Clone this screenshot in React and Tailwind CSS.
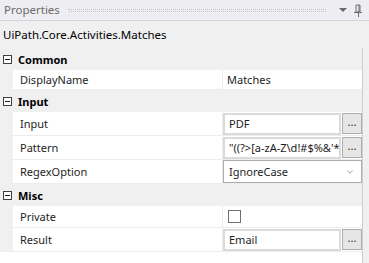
import { ChevronDown } from "lucide-react";

const font = { fontFamily: '"Noto Sans", "Open Sans", sans-serif' };

function Category({ label }) {
  return (
    <div className="flex h-[22px] items-center bg-[#f0f0f0]">
      <span className="ml-[3px] mt-[1px] flex h-[9px] w-[9px] items-center justify-center border border-[#404040] bg-white">
        <span className="h-px w-[5px] bg-[#202020]" />
      </span>
      <span className="ml-[6px] pt-[2px] text-[11px] font-bold text-black">{label}</span>
    </div>
  );
}

function Row({ name, h = "h-[24px]", children }) {
  return (
    <div className={`flex ${h}`}>
      <div className="w-[13px] shrink-0 bg-[#f0f0f0]" />
      <div className="flex w-[210px] shrink-0 items-center border-b border-r border-[#ececec] bg-white pl-[7px] pt-[2px] text-[11px] text-[#1e1e1e]">
        {name}
      </div>
      <div className="flex min-w-0 flex-1 items-center overflow-hidden border-b border-[#ececec] bg-white">
        {children}
      </div>
    </div>
  );
}

function TextBox({ value }) {
  return (
    <div className="flex h-full w-full min-w-0 items-center py-[1px]">
      <div className="flex h-[22px] min-w-0 flex-1 items-center overflow-hidden whitespace-nowrap border-2 border-[#dadada] bg-white pl-[4px] pt-[1px] text-[11px] text-[#1e1e1e]">
        {value}
      </div>
      <button className="ml-[1px] flex h-[21px] w-[20px] shrink-0 items-center justify-center border border-[#adadad] bg-[#e6e6e6] pb-[4px] text-[11px] leading-none text-[#1e1e1e]">
        ...
      </button>
    </div>
  );
}

export default function App() {
  return (
    <div className="h-[263px] w-[369px] overflow-hidden bg-[#f0f0f0]" style={font}>
      {/* title bar */}
      <div className="flex h-[21px] items-center border-b border-[#d6d6d6] bg-[#eeeef2]">
        <span className="ml-[4px] text-[11.5px] text-[#6a6a6a]">Properties</span>
        <div className="ml-[8px] flex w-[258px] flex-col gap-[1px]">
          <div className="border-t border-dotted border-[#c4c4c4]" />
          <div className="ml-[1px] border-t border-dotted border-[#c4c4c4]" />
        </div>
        <span className="ml-[13px] h-0 w-0 border-x-[4px] border-t-[4px] border-x-transparent border-t-[#6a6a6a]" />
        <svg className="ml-[7px]" width="8" height="13" viewBox="0 0 8 13">
          <path d="M2 1h4v7H2z" fill="none" stroke="#6a6a6a" />
          <path d="M0 8.5h8" stroke="#6a6a6a" />
          <path d="M4.5 9v4" stroke="#6a6a6a" />
          <path d="M5 1v7" stroke="#6a6a6a" />
        </svg>
      </div>

      {/* selected activity */}
      <div className="flex h-[27px] items-center pl-[3px] pt-[1px] text-[11.5px] text-black">
        UiPath.Core.Activities.Matches
      </div>

      {/* grid */}
      <div className="w-[363px] border-r border-[#cfcfcf]">
        <Category label="Common" />
        <Row name="DisplayName" h="h-[20px]">
          <span className="pl-[4px] pt-[2px] text-[11px] text-[#1e1e1e]">Matches</span>
        </Row>

        <Category label="Input" />
        <Row name="Input">
          <TextBox value="PDF" />
        </Row>
        <Row name="Pattern">
          <TextBox value={'"((?>[a-zA-Z\\d!#$%&\'*+'} />
        </Row>
        <Row name="RegexOption">
          <div className="flex h-full w-full items-center py-[1px]">
            <div className="flex h-[23px] flex-1 items-center justify-between border border-[#acacac] bg-white pl-[5px] pr-[6px] pt-[1px] text-[11px] text-[#1e1e1e]">
              <span>IgnoreCase</span>
              <ChevronDown size={10} strokeWidth={1.5} color="#606060" />
            </div>
          </div>
        </Row>

        <Category label="Misc" />
        <Row name="Private" h="h-[22px]">
          <span className="ml-[5px] h-[13px] w-[13px] border border-[#707070] bg-white" />
        </Row>
        <Row name="Result">
          <TextBox value="Email" />
        </Row>
        <div className="h-[12px] bg-white" />
      </div>
    </div>
  );
}
